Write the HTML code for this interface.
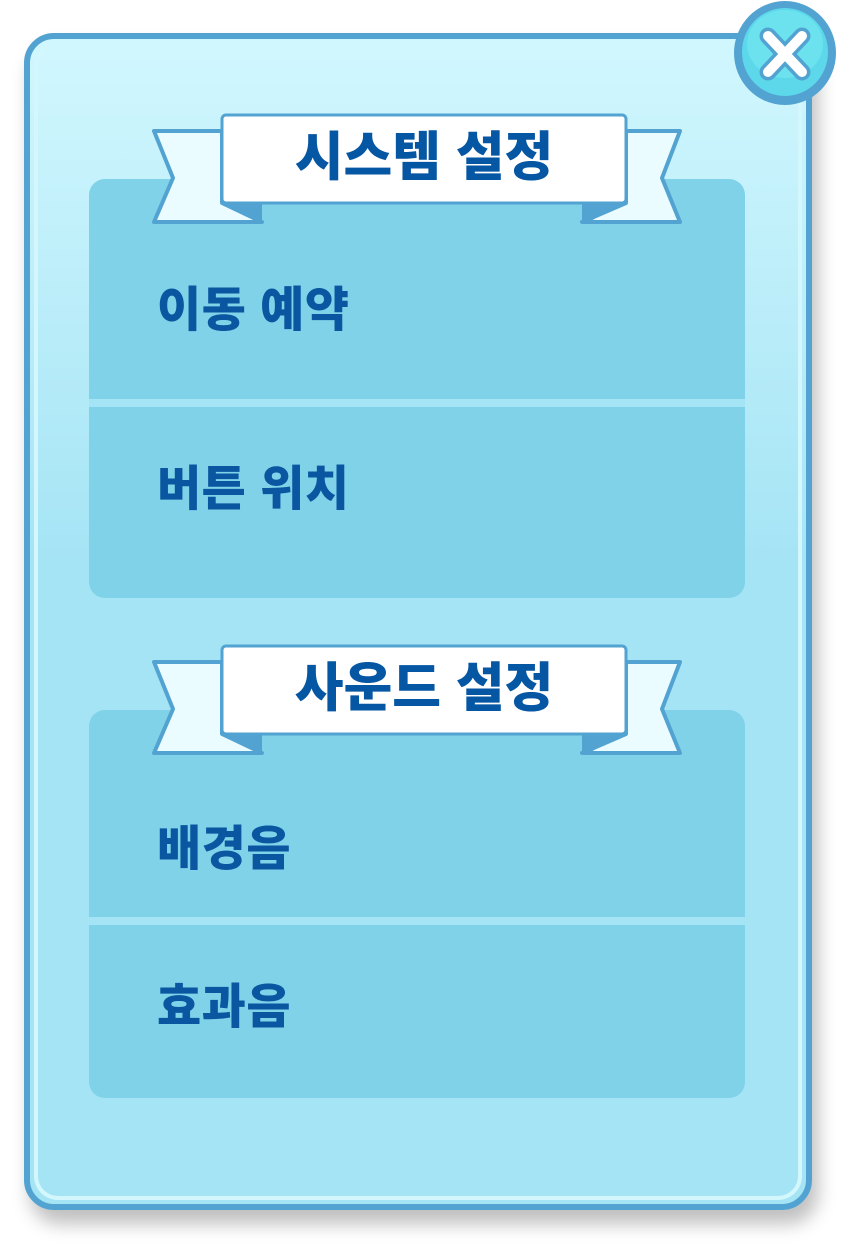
<!DOCTYPE html>
<html><head><meta charset="utf-8"><style>
body{margin:0;width:852px;height:1252px;background:#fff;position:relative;overflow:hidden;font-family:"Liberation Sans","Noto Sans CJK KR",sans-serif;}
.frame{position:absolute;left:24px;top:33px;width:776px;height:1165px;border:6px solid #52a3d1;border-radius:30px;background:linear-gradient(#d1f7fe,#a5e4f5 45%);box-shadow:6px 14px 18px rgba(0,0,0,0.25);}
.inner{position:absolute;left:4px;top:4px;right:4px;bottom:4px;border:4px solid #d3f7fd;border-top:none;border-radius:24px;}
.panel{position:absolute;left:89px;width:656px;background:#80d2e8;border-radius:16px;}
.div{position:absolute;left:89px;width:656px;height:8px;background:#a5e4f5;}
.lbl{position:absolute;left:157px;font-size:48px;font-weight:900;color:#0a56a0;line-height:1;letter-spacing:0.5px;}
.rib{position:absolute;left:150px;width:535px;height:112px;}
.title{position:absolute;left:222px;width:404px;text-align:center;font-size:53px;font-weight:900;color:#0556a3;letter-spacing:0px;line-height:1;}
</style></head><body>
<div class="frame"><div class="inner"></div></div>
<div class="panel" style="top:179px;height:419px"></div>
<div class="div" style="top:399px"></div>
<div class="panel" style="top:710px;height:388px"></div>
<div class="div" style="top:917px"></div>
<div class="lbl" style="top:287px">이동 예약</div>
<div class="lbl" style="top:466px">버튼 위치</div>
<div class="lbl" style="top:826px">배경음</div>
<div class="lbl" style="top:984px">효과음</div>

<svg class="rib" style="top:112px" viewBox="150 112 535 112">
<path d="M154 131 H222 V203 L262 222 H154 L173 178 Z" fill="#eafcff" stroke="#52a3d1" stroke-width="4" stroke-linejoin="round"/>
<path d="M680 131 H626 V203 L582 222 H680 L662 178 Z" fill="#eafcff" stroke="#52a3d1" stroke-width="4" stroke-linejoin="round"/>
<path d="M222 201 L262 222 V204 Z" fill="#52a3d1"/>
<path d="M626 201 L582 226 V204 Z" fill="#52a3d1"/>
<rect x="222" y="115" width="404" height="88" rx="4" fill="#fff" stroke="#52a3d1" stroke-width="3"/>
</svg>
<div class="title" style="top:131px">시스템 설정</div>

<svg class="rib" style="top:643px" viewBox="150 112 535 112">
<path d="M154 131 H222 V203 L262 222 H154 L173 178 Z" fill="#eafcff" stroke="#52a3d1" stroke-width="4" stroke-linejoin="round"/>
<path d="M680 131 H626 V203 L582 222 H680 L662 178 Z" fill="#eafcff" stroke="#52a3d1" stroke-width="4" stroke-linejoin="round"/>
<path d="M222 201 L262 222 V204 Z" fill="#52a3d1"/>
<path d="M626 201 L582 226 V204 Z" fill="#52a3d1"/>
<rect x="222" y="115" width="404" height="88" rx="4" fill="#fff" stroke="#52a3d1" stroke-width="3"/>
</svg>
<div class="title" style="top:662px">사운드 설정</div>

<svg style="position:absolute;left:728px;top:0" width="114" height="110" viewBox="728 0 114 110">
<ellipse cx="785" cy="53" rx="51" ry="52" fill="#52a3d1"/>
<ellipse cx="785" cy="52" rx="43" ry="44" fill="#5dd8ea"/>
<ellipse cx="785" cy="44" rx="38" ry="34" fill="#6be2ee"/>
<path d="M768 36 L802 72 M802 36 L768 72" stroke="#52a3d1" stroke-width="17" stroke-linecap="round"/>
<path d="M768 36 L802 72 M802 36 L768 72" stroke="#fff" stroke-width="10" stroke-linecap="round"/>
</svg>
</body></html>
